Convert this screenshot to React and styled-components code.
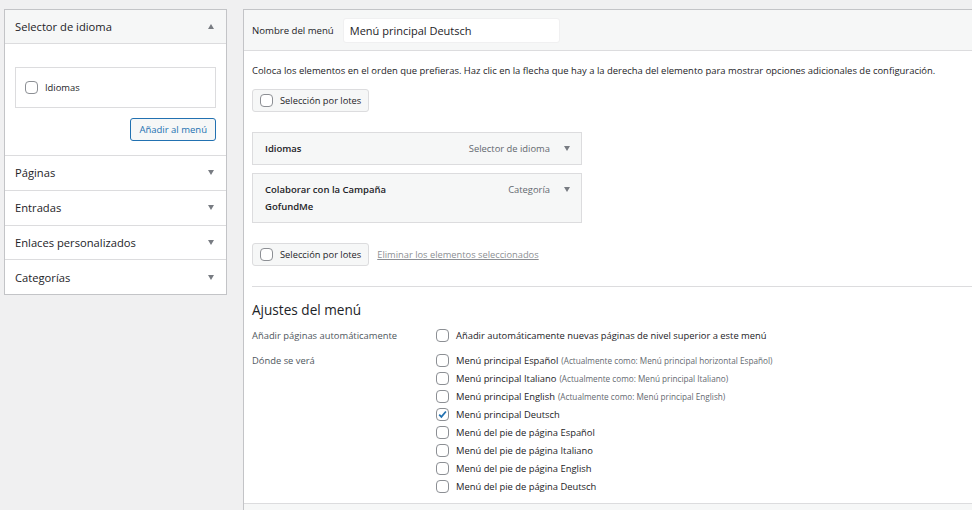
import React from "react";
import styled, { createGlobalStyle } from "styled-components";

const GlobalStyle = createGlobalStyle`
    body {
        margin: 0;
        background: #f0f0f1;
        font-family: "Open Sans", "Noto Sans", sans-serif;
        color: #1d2327;
    }
`;

const Page = styled.div`
    display: flex;
    align-items: flex-start;
    gap: 16px;
    padding: 9px 0 0 4px;
    height: 501px;
    overflow: hidden;
`;

const SidePanel = styled.div`
    width: 221px;
    flex: none;
    background: #fff;
    border: 1px solid #c3c4c7;
`;

const SectionHead = styled.div`
    display: flex;
    align-items: center;
    justify-content: space-between;
    height: ${(p) => (p.$open ? 33 : 33.75)}px;
    padding: 0 10px;
    font-size: 11.2px;
    background: ${(p) => (p.$open ? "#f6f7f7" : "#fff")};
    border-top: ${(p) => (p.$first ? "none" : "1px solid #dcdcde")};
    border-bottom: ${(p) => (p.$open ? "1px solid #dcdcde" : "none")};
`;

const Arrow = styled.span`
    width: 0;
    height: 0;
    margin-right: 2px;
    border-left: 3.5px solid transparent;
    border-right: 3.5px solid transparent;
    ${(p) =>
        p.$up
            ? "border-bottom: 5px solid #787c82;"
            : "border-top: 5px solid #787c82;"}
`;

const SectionBody = styled.div`
    display: flex;
    flex-direction: column;
    align-items: flex-end;
    gap: 10px;
    padding: 23px 10px 14px;
`;

const ChoiceBox = styled.div`
    align-self: stretch;
    display: flex;
    align-items: center;
    gap: 7px;
    height: 39px;
    padding: 0 9px;
    border: 1px solid #dcdcde;
    font-size: 9.4px;
`;

const Button = styled.button`
    display: flex;
    align-items: center;
    gap: 7px;
    height: 23px;
    padding: 0 ${(p) => (p.$primary ? 8 : 7)}px;
    border-radius: 3px;
    font-family: inherit;
    font-size: ${(p) => (p.$primary ? 9.5 : 9.3)}px;
    background: #f6f7f7;
    color: ${(p) => (p.$primary ? "#2271b1" : "#1d2327")};
    border: 1px solid ${(p) => (p.$primary ? "#2271b1" : "#dcdcde")};
`;

const Box = styled.span`
    width: 13px;
    height: 13px;
    flex: none;
    box-sizing: border-box;
    border: 1px solid #8c8f94;
    border-radius: 4px;
    background: #fff;
    display: flex;
    align-items: center;
    justify-content: center;
`;

const Check = ({ checked }) => (
    <Box>
        {checked && (
            <svg width="11" height="11" viewBox="0 0 11 11">
                <path
                    d="M2.2 5.6 L4.4 7.9 L8.9 2.5"
                    fill="none"
                    stroke="#2271b1"
                    strokeWidth="1.7"
                />
            </svg>
        )}
    </Box>
);

const MainPanel = styled.div`
    width: 740px;
    flex: none;
    background: #fff;
    border: 1px solid #c3c4c7;
    border-right: none;
`;

const NameBar = styled.div`
    display: flex;
    align-items: center;
    gap: 9px;
    height: 40px;
    padding: 0 8px;
    background: #f6f7f7;
    border-bottom: 1px solid #dcdcde;
    font-size: 9.6px;
`;

const NameInput = styled.div`
    width: 203px;
    height: 23px;
    display: flex;
    align-items: center;
    padding: 0 6px;
    background: #fff;
    border: 1px solid #f0f0f1;
    border-radius: 3px;
    font-size: 11px;
`;

const Body = styled.div`
    display: flex;
    flex-direction: column;
    align-items: flex-start;
    padding: 13px 8px 0;
`;

const Help = styled.p`
    margin: 0 0 12px;
    font-size: 9.45px;
`;

const ItemList = styled.div`
    display: flex;
    flex-direction: column;
    gap: 8px;
    margin: 20px 0 20px;
`;

const Item = styled.div`
    width: 307px;
    display: flex;
    justify-content: space-between;
    align-items: flex-start;
    padding: 7px 9px 7px 12px;
    background: #f6f7f7;
    border: 1px solid #dcdcde;
`;

const ItemTitle = styled.div`
    width: 140px;
    font-size: 9.5px;
    font-weight: 600;
    line-height: 17px;
`;

const ItemType = styled.div`
    display: flex;
    align-items: center;
    gap: 14px;
    height: 17px;
    font-size: 9.4px;
    color: #646970;
`;

const Actions = styled.div`
    display: flex;
    align-items: center;
    gap: 8px;
`;

const Link = styled.a`
    font-size: 9.3px;
    color: #8c8f94;
    text-decoration: underline;
`;

const Settings = styled.div`
    align-self: stretch;
    margin-top: 20px;
    padding-top: 13px;
    border-top: 1px solid #dcdcde;
`;

const Heading = styled.h3`
    margin: 0 0 8px;
    font-size: 13.6px;
    font-weight: 500;
`;

const SettingRow = styled.div`
    display: grid;
    grid-template-columns: 184px 1fr;
    font-size: 9.4px;
    margin-bottom: 8px;
`;

const SettingLabel = styled.div`
    color: #50575e;
    line-height: 17px;
`;

const Options = styled.div`
    display: flex;
    flex-direction: column;
    gap: 1px;
`;

const Option = styled.label`
    display: flex;
    align-items: center;
    gap: 7px;
    height: 17px;
`;

const Note = styled.span`
    margin-left: 3px;
    font-size: 8.2px;
    color: #646970;
`;

const Footer = styled.div`
    height: 20px;
    margin: 3px -8px 0;
    background: #f6f7f7;
    border-top: 1px solid #dcdcde;
`;

const sections = ["Páginas", "Entradas", "Enlaces personalizados", "Categorías"];

const locations = [
    ["Menú principal Español", "Menú principal horizontal Español"],
    ["Menú principal Italiano", "Menú principal Italiano"],
    ["Menú principal English", "Menú principal English"],
    ["Menú principal Deutsch", null, true],
    ["Menú del pie de página Español"],
    ["Menú del pie de página Italiano"],
    ["Menú del pie de página English"],
    ["Menú del pie de página Deutsch"],
];

export default function App() {
    return (
        <>
            <GlobalStyle />
            <Page>
                <SidePanel>
                    <SectionHead $open $first>
                        Selector de idioma
                        <Arrow $up />
                    </SectionHead>
                    <SectionBody>
                        <ChoiceBox>
                            <Check />
                            Idiomas
                        </ChoiceBox>
                        <Button $primary>Añadir al menú</Button>
                    </SectionBody>
                    {sections.map((s) => (
                        <SectionHead key={s}>
                            {s}
                            <Arrow />
                        </SectionHead>
                    ))}
                </SidePanel>

                <MainPanel>
                    <NameBar>
                        Nombre del menú
                        <NameInput>Menú principal Deutsch</NameInput>
                    </NameBar>
                    <Body>
                        <Help>
                            Coloca los elementos en el orden que prefieras. Haz
                            clic en la flecha que hay a la derecha del elemento
                            para mostrar opciones adicionales de configuración.
                        </Help>
                        <Button>
                            <Check />
                            Selección por lotes
                        </Button>
                        <ItemList>
                            <Item>
                                <ItemTitle>Idiomas</ItemTitle>
                                <ItemType>
                                    Selector de idioma
                                    <Arrow />
                                </ItemType>
                            </Item>
                            <Item>
                                <ItemTitle>
                                    Colaborar con la Campaña GofundMe
                                </ItemTitle>
                                <ItemType>
                                    Categoría
                                    <Arrow />
                                </ItemType>
                            </Item>
                        </ItemList>
                        <Actions>
                            <Button>
                                <Check />
                                Selección por lotes
                            </Button>
                            <Link>Eliminar los elementos seleccionados</Link>
                        </Actions>
                        <Settings>
                            <Heading>Ajustes del menú</Heading>
                            <SettingRow>
                                <SettingLabel>Añadir páginas automáticamente</SettingLabel>
                                <Option>
                                    <Check />
                                    Añadir automáticamente nuevas páginas de
                                    nivel superior a este menú
                                </Option>
                            </SettingRow>
                            <SettingRow>
                                <SettingLabel>Dónde se verá</SettingLabel>
                                <Options>
                                    {locations.map(([name, current, checked]) => (
                                        <Option key={name}>
                                            <Check checked={checked} />
                                            <span>
                                                {name}
                                                {current && (
                                                    <Note>
                                                        (Actualmente como: {current})
                                                    </Note>
                                                )}
                                            </span>
                                        </Option>
                                    ))}
                                </Options>
                            </SettingRow>
                            <Footer />
                        </Settings>
                    </Body>
                </MainPanel>
            </Page>
        </>
    );
}
